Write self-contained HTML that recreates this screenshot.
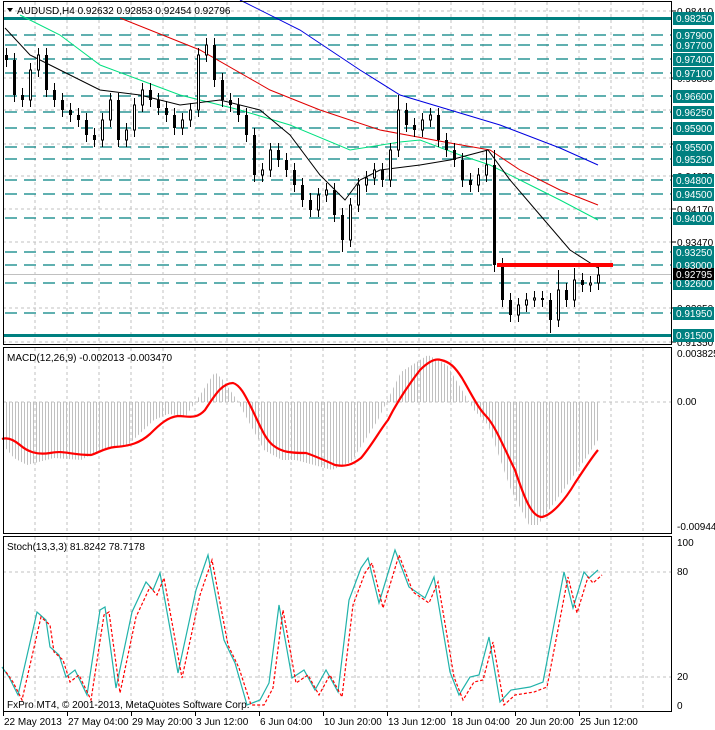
<!DOCTYPE html>
<html><head><meta charset="utf-8">
<style>
html,body{margin:0;padding:0;background:#fff;}
body{width:715px;height:730px;overflow:hidden;position:relative;}
svg{position:absolute;left:0;top:0;}
text{font-family:"Liberation Sans",sans-serif;font-size:10px;}
</style></head>
<body>
<svg width="715" height="730" xmlns="http://www.w3.org/2000/svg">
<defs><pattern id="hb" width="3" height="10" patternUnits="userSpaceOnUse"><rect x="0" y="0" width="1" height="10" fill="#c0c0c0"/></pattern></defs>
<g stroke="#c0c0c0" stroke-dasharray="3,3">
<path d="M35,2V345M67,2V345M99,2V345M131,2V345M163,2V345M195,2V345M227,2V345M259,2V345M291,2V345M323,2V345M355,2V345M387,2V345M419,2V345M451,2V345M483,2V345M515,2V345M547,2V345M579,2V345M611,2V345M643,2V345"/>
<path d="M35,348V533M67,348V533M99,348V533M131,348V533M163,348V533M195,348V533M227,348V533M259,348V533M291,348V533M323,348V533M355,348V533M387,348V533M419,348V533M451,348V533M483,348V533M515,348V533M547,348V533M579,348V533M611,348V533M643,348V533"/>
<path d="M35,537V711M67,537V711M99,537V711M131,537V711M163,537V711M195,537V711M227,537V711M259,537V711M291,537V711M323,537V711M355,537V711M387,537V711M419,537V711M451,537V711M483,537V711M515,537V711M547,537V711M579,537V711M611,537V711M643,537V711"/>
<path d="M3,11H672M3,78H672M3,110H672M3,144H672M3,176H672M3,209H672M3,242H672M3,308H672M3,342H672M3,402H672M3,572H672M3,677H672"/>
</g>
<line x1="3" y1="274.5" x2="672" y2="274.5" stroke="#c0c0c0"/>
<path d="M5,35H672M5,45H672M5,59H672M5,73H672M5,96H672M5,112H672M5,128H672M5,147H672M5,159H672M5,180H672M5,194H672M5,218H672M5,252H672M5,265H672M5,283H672M5,313H672" stroke="#008080" stroke-width="1.3" stroke-dasharray="12,7" fill="none"/>
<rect x="3" y="17" width="669" height="3" fill="#008080"/>
<rect x="3" y="334" width="669" height="3" fill="#008080"/>
<polyline points="240,0 300,30 360,70 400,95 450,110 500,125 560,148 598,165" fill="none" stroke="#0000e0"/>
<polyline points="120,18 200,50 270,90 320,110 380,130 450,143 490,150 520,170 560,190 598,205" fill="none" stroke="#e00000"/>
<polyline points="20,15 60,35 100,65 140,80 180,95 240,110 290,125 350,150 400,142 420,140 460,155 490,165 530,185 560,200 598,220" fill="none" stroke="#00e080"/>
<polyline points="5,28 30,55 60,70 100,90 140,95 180,105 220,100 260,110 290,135 320,175 345,200 360,180 380,170 420,165 450,160 488,150 510,180 540,215 570,250 598,268" fill="none" stroke="#000"/>
<path stroke="#000" fill="none" d="M6.5,48V67M14.5,53V102M22.5,88V107M30.5,63V107M38.5,48V77M46.5,48V97M54.5,83V107M62.5,93V117M70.5,103V122M78.5,108V127M86.5,113V142M94.5,128V147M102.5,113V147M110.5,93V127M118.5,93V147M126.5,123V147M134.5,98V137M142.5,83V112M150.5,83V107M158.5,93V115M166.5,101V122M174.5,108V135M182.5,113V135M190.5,103V127M198.5,48V117M206.5,38V62M214.5,38V87M222.5,73V107M230.5,93V112M238.5,98V122M246.5,108V142M254.5,128V182M262.5,163V182M270.5,143V177M278.5,143V167M286.5,153V177M294.5,163V192M302.5,178V207M310.5,193V217M318.5,188V217M326.5,183V202M334.5,183V222M342.5,208V252M350.5,198V247M358.5,178V212M366.5,171V192M374.5,163V185M382.5,163V187M390.5,143V187M398.5,95V157M406.5,103V132M414.5,118V137M422.5,113V137M430.5,108V127M438.5,108V147M446.5,133V157M454.5,143V167M462.5,153V187M470.5,173V192M478.5,168V192M486.5,150V182M494.5,150V272M502.5,258V307M510.5,293V322M518.5,298V322M526.5,293V312M534.5,291V307M542.5,291V307M550.5,293V333M558.5,270V327M566.5,283V307M574.5,268V307M582.5,273V292M590.5,276V292M598.5,265V290"/>
<path fill="#000" d="M5,55h3V60h-3ZM13,60h3V95h-3ZM21,95h3V100h-3ZM45,55h3V90h-3ZM53,90h3V100h-3ZM61,100h3V110h-3ZM69,110h3V115h-3ZM77,115h3V120h-3ZM85,120h3V135h-3ZM93,135h3V140h-3ZM117,100h3V140h-3ZM149,90h3V100h-3ZM157,100h3V108h-3ZM165,108h3V115h-3ZM173,115h3V128h-3ZM213,45h3V80h-3ZM221,80h3V100h-3ZM229,100h3V105h-3ZM237,105h3V115h-3ZM245,115h3V135h-3ZM253,135h3V175h-3ZM277,150h3V160h-3ZM285,160h3V170h-3ZM293,170h3V185h-3ZM301,185h3V200h-3ZM309,200h3V210h-3ZM333,190h3V215h-3ZM341,215h3V240h-3ZM381,170h3V180h-3ZM405,110h3V125h-3ZM413,125h3V130h-3ZM437,115h3V140h-3ZM445,140h3V150h-3ZM453,150h3V160h-3ZM461,160h3V180h-3ZM469,180h3V185h-3ZM493,165h3V265h-3ZM501,265h3V300h-3ZM509,300h3V315h-3ZM541,298h3V300h-3ZM549,300h3V320h-3ZM565,290h3V300h-3ZM581,280h3V285h-3Z"/>
<path fill="#fff" stroke="#000" d="M29.5,70h2V100h-2ZM37.5,55h2V70h-2ZM101.5,120h2V140h-2ZM109.5,100h2V120h-2ZM125.5,130h2V140h-2ZM133.5,105h2V130h-2ZM141.5,90h2V105h-2ZM181.5,120h2V128h-2ZM189.5,110h2V120h-2ZM197.5,55h2V110h-2ZM205.5,45h2V55h-2ZM261.5,170h2V175h-2ZM269.5,150h2V170h-2ZM317.5,195h2V210h-2ZM325.5,190h2V195h-2ZM349.5,205h2V240h-2ZM357.5,185h2V205h-2ZM365.5,178h2V185h-2ZM373.5,170h2V178h-2ZM389.5,150h2V180h-2ZM397.5,110h2V150h-2ZM421.5,120h2V130h-2ZM429.5,115h2V120h-2ZM477.5,175h2V185h-2ZM485.5,165h2V175h-2ZM517.5,305h2V315h-2ZM525.5,300h2V305h-2ZM533.5,298h2V300h-2ZM557.5,290h2V320h-2ZM573.5,280h2V300h-2ZM589.5,283h2V285h-2ZM597.5,275h2V283h-2Z"/>
<rect x="497" y="263" width="116" height="4" fill="#ff0000"/>
<polygon fill="url(#hb)" points="3,402 3,445 14,458 27,465 54,458 81,460 100,450 127,446 154,420 168,414 186,416 200,395 215,372 223,380 237,400 264,450 282,460 296,460 314,465 332,470 351,462 378,420 401,372 428,355 447,365 474,410 488,425 511,490 529,525 538,525 565,488 588,455 598,440 598,402"/>
<path d="M2,439 C8,437 14,440 20,445 C28,452 37,455 50,453 C64,450 70,455 91,455 C100,452 105,448 115,447 C130,446 140,443 150,434 C160,424 168,417 178,416 C188,416 196,420 205,410 C215,395 222,383 233,383 C240,385 245,395 250,405 C260,425 265,440 274,446 C282,452 290,453 306,453 C315,456 324,460 335,465 C345,467 352,465 361,458 C372,445 380,430 388,420 C398,400 410,383 420,370 C428,362 435,358 441,360 C450,362 455,367 462,378 C472,395 478,408 486,416 C495,425 505,450 515,470 C525,500 532,517 542,517 C552,515 565,500 575,483 C585,468 592,457 598,450" fill="none" stroke="#ff0000" stroke-width="2.2" stroke-linejoin="round"/>
<polyline points="2,667 9,677 18,695 37,612 46,620 50,647 59,655 66,677 75,670 87,695 100,610 105,607 116,688 132,612 146,582 153,590 160,573 178,673 196,590 208,555 224,640 235,663 247,705 260,700 269,683 279,605 292,678 304,670 315,690 326,670 338,692 349,600 361,568 368,558 379,603 395,550 409,587 425,598 434,577 450,672 459,695 470,677 479,675 489,637 500,702 511,690 530,687 543,682 564,572 573,608 584,572 589,578 598,570" fill="none" stroke="#20b2aa" stroke-width="1.2"/>
<polyline points="6,672 13,682 22,700 41,617 50,625 54,652 63,660 70,682 79,675 91,700 104,615 109,612 120,693 136,617 150,587 157,595 164,578 182,678 200,595 212,560 228,645 239,668 251,705 264,705 273,688 283,610 296,683 308,675 319,695 330,675 342,697 353,605 365,573 372,563 383,608 399,555 413,592 429,603 438,582 454,677 463,700 474,682 483,680 493,642 504,705 515,695 534,692 547,687 568,577 577,613 588,577 593,583 602,575" fill="none" stroke="#ff0000" stroke-width="1.2" stroke-dasharray="3,2"/>
<rect x="3.5" y="1.5" width="668" height="343" fill="none" stroke="#000"/>
<rect x="3.5" y="347.5" width="668" height="186" fill="none" stroke="#000"/>
<rect x="3.5" y="536.5" width="668" height="175" fill="none" stroke="#000"/>
<path d="M7,8 L13,8 L10,12 Z" fill="#000"/>
<text x="17" y="14">AUDUSD,H4  0.92632 0.92853 0.92454 0.92796</text>
<text x="7" y="361">MACD(12,26,9) -0.002013 -0.003470</text>
<text x="7" y="550">Stoch(13,3,3) 81.8242 78.7178</text>
<text x="7" y="708">FxPro MT4, © 2001-2013, MetaQuotes Software Corp.</text>
<path d="M672,11h4M672,209h4M672,242h4M672,342h4M672,78h4M672,144h4M672,176h4M672,308h4" stroke="#000"/>
<text x="677" y="15">0.98410</text><text x="677" y="213">0.94170</text><text x="677" y="246">0.93470</text><text x="677" y="346">0.91350</text>
<text x="677" y="82">0.96880</text><text x="677" y="148">0.95550</text><text x="677" y="180">0.94870</text><text x="677" y="312">0.92050</text>
<g fill="#008080">
<rect x="673" y="12" width="41" height="13"/><rect x="673" y="29" width="41" height="13"/><rect x="673" y="39" width="41" height="13"/><rect x="673" y="53" width="41" height="13"/><rect x="673" y="67" width="41" height="13"/><rect x="673" y="90" width="41" height="13"/><rect x="673" y="106" width="41" height="13"/><rect x="673" y="122" width="41" height="13"/><rect x="673" y="141" width="41" height="13"/><rect x="673" y="153" width="41" height="13"/><rect x="673" y="174" width="41" height="13"/><rect x="673" y="188" width="41" height="13"/><rect x="673" y="212" width="41" height="13"/><rect x="673" y="246" width="41" height="13"/><rect x="673" y="259" width="41" height="13"/><rect x="673" y="277" width="41" height="13"/><rect x="673" y="307" width="41" height="13"/><rect x="673" y="329" width="41" height="13"/>
</g>
<rect x="673" y="268" width="41" height="12" fill="#000"/>
<g fill="#fff">
<text x="676" y="22">0.98250</text><text x="676" y="39">0.97900</text><text x="676" y="49">0.97700</text><text x="676" y="63">0.97400</text><text x="676" y="77">0.97100</text><text x="676" y="100">0.96600</text><text x="676" y="116">0.96250</text><text x="676" y="132">0.95900</text><text x="676" y="151">0.95500</text><text x="676" y="163">0.95250</text><text x="676" y="184">0.94800</text><text x="676" y="198">0.94500</text><text x="676" y="222">0.94000</text><text x="676" y="256">0.93250</text><text x="676" y="269">0.93000</text><text x="676" y="278">0.92795</text><text x="676" y="287">0.92600</text><text x="676" y="317">0.91950</text><text x="676" y="339">0.91500</text>
</g>
<text x="677" y="357">0.003825</text><text x="677" y="405">0.00</text><text x="677" y="530">-0.009446</text>
<text x="677" y="546">100</text><text x="677" y="575">80</text><text x="677" y="680">20</text><text x="677" y="709">0</text>
<path d="M3.5,712V716M67.5,712V716M131.5,712V716M195.5,712V716M259.5,712V716M323.5,712V716M387.5,712V716M451.5,712V716M515.5,712V716M579.5,712V716" stroke="#000"/>
<text x="4" y="725">22 May 2013</text><text x="68" y="725">27 May 04:00</text><text x="132" y="725">29 May 20:00</text><text x="196" y="725">3 Jun 12:00</text><text x="260" y="725">6 Jun 04:00</text><text x="324" y="725">10 Jun 20:00</text><text x="388" y="725">13 Jun 12:00</text><text x="452" y="725">18 Jun 04:00</text><text x="516" y="725">20 Jun 20:00</text><text x="580" y="725">25 Jun 12:00</text>
</svg>
</body></html>
